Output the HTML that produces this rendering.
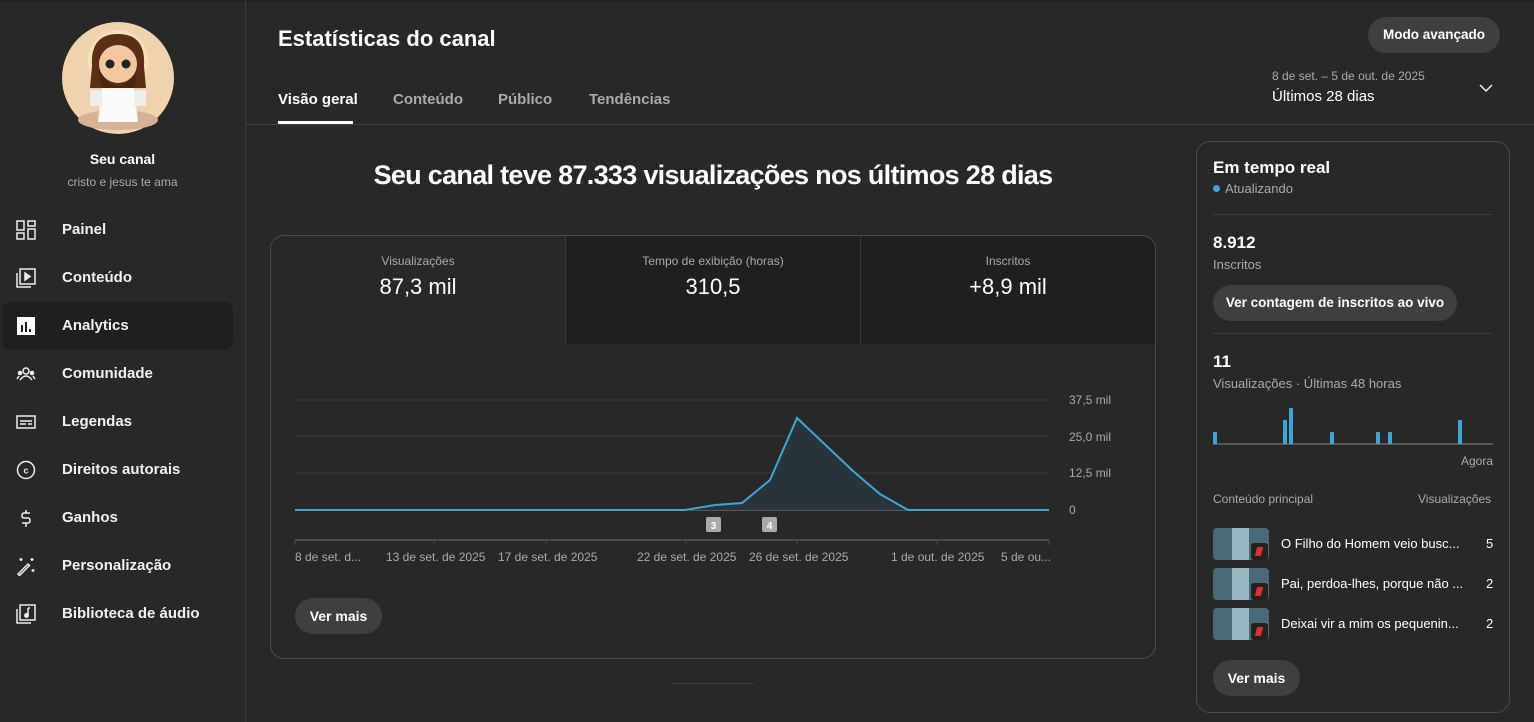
<!DOCTYPE html>
<html><head><meta charset="utf-8"><style>
*{box-sizing:border-box;margin:0;padding:0}
body{width:1534px;height:722px;overflow:hidden;background:#282828;font-family:"Liberation Sans",Arial,sans-serif;color:#fff;position:relative}
.a{position:absolute;white-space:nowrap}
.nav{position:absolute;left:0;width:245px;height:48px}
.nav span{position:absolute;left:62px;top:15px;font-size:15px;font-weight:bold;color:#f1f1f1}
.nav svg{position:absolute;left:16px;top:14px}
.g{color:#aaa}
.btn{position:absolute;background:#3f3f3f;border-radius:20px;font-weight:bold;font-size:14px;text-align:center}
.tile{position:absolute;top:236px;height:108px;text-align:center;background:#1f1f1f}
.tile .l{font-size:12px;color:#aaa;margin-top:18px}
.tile .v{font-size:22px;margin-top:6px}
.ax{position:absolute;font-size:12px;color:#aaa}
</style></head><body>
<div class="a" style="left:0;top:0;width:1534px;height:2px;background:#222"></div>
<div class="a" style="left:245px;top:0;width:1px;height:722px;background:#3a3a3a"></div>
<svg class="a" style="left:62px;top:22px" width="112" height="112" viewBox="0 0 112 112">
<circle cx="56" cy="56" r="56" fill="#efd3ae"/>
<ellipse cx="56" cy="98" rx="40" ry="10" fill="#d7b294"/>
<circle cx="56" cy="38" r="30" fill="#f6e2b8"/>
<path d="M30 44 Q28 12 56 12 Q84 12 82 44 L84 66 L28 66 Z" fill="#5a2f16"/>
<ellipse cx="56" cy="42" rx="19" ry="19" fill="#f3c8a0"/>
<path d="M37 48 Q56 80 75 48 L73 64 Q56 76 39 64Z" fill="#4a2510"/>
<circle cx="48" cy="42" r="4.5" fill="#222"/><circle cx="64" cy="42" r="4.5" fill="#222"/>
<path d="M40 66 L72 66 L76 100 L36 100Z" fill="#fafafa"/>
<rect x="28" y="68" width="12" height="16" fill="#eee"/><rect x="72" y="68" width="12" height="16" fill="#eee"/>
</svg>
<div class="a" style="left:0;width:245px;top:151px;text-align:center;font-size:14px;font-weight:bold">Seu canal</div>
<div class="a" style="left:0;width:245px;top:175px;text-align:center;font-size:12px;color:#aaa">cristo e jesus te ama</div>
<div class="a" style="left:2px;top:302px;width:231px;height:48px;background:#1f1f1f;border-radius:8px"></div>
<div class="nav" style="top:206px"><svg width="20" height="20" fill="none" stroke="#eee" stroke-width="1.5"><rect x="1" y="1" width="7" height="9"/><rect x="12" y="1" width="7" height="5"/><rect x="1" y="13" width="7" height="6"/><rect x="12" y="9" width="7" height="10"/></svg><span>Painel</span></div>
<div class="nav" style="top:254px"><svg width="20" height="20" fill="none" stroke="#eee" stroke-width="1.5"><rect x="4" y="1" width="15" height="15"/><path d="M1 5V19H15"/><path d="M9 5L14 8.5L9 12Z" fill="#eee"/></svg><span>Conteúdo</span></div>
<div class="nav" style="top:302px"><svg width="20" height="20"><rect x="1" y="1" width="18" height="18" fill="#fff"/><rect x="5" y="9" width="2" height="7" fill="#1f1f1f"/><rect x="9" y="6" width="2" height="10" fill="#1f1f1f"/><rect x="13" y="13" width="2" height="3" fill="#1f1f1f"/></svg><span>Analytics</span></div>
<div class="nav" style="top:350px"><svg width="20" height="20" fill="none" stroke="#eee" stroke-width="1.5"><circle cx="10" cy="7" r="3"/><path d="M4 16Q10 8 16 16"/><circle cx="4" cy="9" r="1.5" fill="#eee"/><circle cx="16" cy="9" r="1.5" fill="#eee"/><path d="M1 15L3 12M19 15L17 12"/></svg><span>Comunidade</span></div>
<div class="nav" style="top:398px"><svg width="20" height="20" fill="none" stroke="#eee" stroke-width="1.5"><rect x="1" y="4" width="18" height="12"/><path d="M4 9H16M4 12H10M12 12H16"/></svg><span>Legendas</span></div>
<div class="nav" style="top:446px"><svg width="20" height="20" fill="none" stroke="#eee" stroke-width="1.5"><circle cx="10" cy="10" r="8.5"/><text x="10" y="13.5" font-size="9" font-weight="bold" fill="#eee" stroke="none" text-anchor="middle" font-family="Liberation Sans">c</text></svg><span>Direitos autorais</span></div>
<div class="nav" style="top:494px"><svg width="20" height="20" fill="none" stroke="#eee" stroke-width="1.5"><path d="M14 5H8Q6 5 6 7.5T8 10H12Q14 10 14 12.5T12 15H6M10 2V5M10 15V19"/></svg><span>Ganhos</span></div>
<div class="nav" style="top:542px"><svg width="20" height="20" fill="none" stroke="#eee" stroke-width="1.5"><path d="M2 18L12 8L13.5 9.5L3.5 19.5Z"/><path d="M5 2V5M3.5 3.5H6.5M16 2V5M14.5 3.5H17.5M17 13V16M15.5 14.5H18.5"/></svg><span>Personalização</span></div>
<div class="nav" style="top:590px"><svg width="20" height="20" fill="none" stroke="#eee" stroke-width="1.5"><rect x="4" y="1" width="15" height="15"/><path d="M1 5V19H15"/><path d="M12 4V11M12 4H14" /><circle cx="10.5" cy="11.5" r="1.7" fill="#eee"/></svg><span>Biblioteca de áudio</span></div>
<div class="a" style="left:278px;top:26px;font-size:22px;font-weight:bold">Estatísticas do canal</div>
<div class="a" style="left:278px;top:91px;font-size:15px;font-weight:bold">Visão geral</div>
<div class="a" style="left:278px;top:121px;width:75px;height:3px;background:#fff"></div>
<div class="a g" style="left:393px;top:91px;font-size:15px;font-weight:bold">Conteúdo</div>
<div class="a g" style="left:498px;top:91px;font-size:15px;font-weight:bold">Público</div>
<div class="a g" style="left:589px;top:91px;font-size:15px;font-weight:bold">Tendências</div>
<div class="a" style="left:246px;top:124px;width:1288px;height:1px;background:#3a3a3a"></div>
<div class="btn" style="left:1368px;top:17px;width:132px;height:36px;line-height:36px;font-size:13.5px">Modo avançado</div>
<div class="a g" style="left:1272px;top:69px;font-size:12px">8 de set. – 5 de out. de 2025</div>
<div class="a" style="left:1272px;top:88px;font-size:15px">Últimos 28 dias</div>
<svg class="a" style="left:1478px;top:82px" width="16" height="12"><path d="M2 3L8 9L14 3" fill="none" stroke="#eee" stroke-width="1.5"/></svg>
<div class="a" style="left:270px;width:886px;top:160px;text-align:center;font-size:27px;font-weight:bold;letter-spacing:-0.7px">Seu canal teve 87.333 visualizações nos últimos 28 dias</div>
<div class="a" style="left:270px;top:235px;width:886px;height:424px;border:1px solid #4a4a4a;border-radius:14px;overflow:hidden"></div>
<div class="tile" style="left:271px;width:294px;background:#282828;border-top-left-radius:13px"><div class="l">Visualizações</div><div class="v">87,3 mil</div></div>
<div class="tile" style="left:565px;width:295px;border-left:1px solid #3a3a3a"><div class="l">Tempo de exibição (horas)</div><div class="v">310,5</div></div>
<div class="tile" style="left:860px;width:295px;border-left:1px solid #3a3a3a;border-top-right-radius:13px"><div class="l">Inscritos</div><div class="v">+8,9 mil</div></div>
<svg class="a" style="left:0;top:0" width="1534" height="722">
<g stroke="#3a3a3a" stroke-width="1"><line x1="295" y1="400" x2="1049" y2="400"/><line x1="295" y1="436" x2="1049" y2="436"/><line x1="295" y1="473" x2="1049" y2="473"/></g>
<line x1="295" y1="510" x2="1049" y2="510" stroke="#888"/>
<path d="M685 510L715 505L742 503L770 480L797 418L853 471L880 494L908 510Z" fill="#29353b"/>
<path d="M295 510L685 510L715 505L742 503L770 480L797 418L853 471L880 494L908 510L1049 510" fill="none" stroke="#3ea6d6" stroke-width="2"/>
<line x1="295" y1="540" x2="1049" y2="540" stroke="#4a4a4a" stroke-width="2"/>
<g stroke="#4a4a4a"><line x1="295" y1="540" x2="295" y2="545"/><line x1="434" y1="540" x2="434" y2="545"/><line x1="546" y1="540" x2="546" y2="545"/><line x1="686" y1="540" x2="686" y2="545"/><line x1="797" y1="540" x2="797" y2="545"/><line x1="937" y1="540" x2="937" y2="545"/><line x1="1049" y1="540" x2="1049" y2="545"/></g>
<rect x="706" y="517" width="15" height="15" rx="2" fill="#aaa"/><text x="713.5" y="529" font-size="10" font-weight="bold" fill="#fff" text-anchor="middle" font-family="Liberation Sans">3</text>
<rect x="762" y="517" width="15" height="15" rx="2" fill="#aaa"/><text x="769.5" y="529" font-size="10" font-weight="bold" fill="#fff" text-anchor="middle" font-family="Liberation Sans">4</text>
<line x1="1213" y1="444" x2="1493" y2="444" stroke="#888"/>
<g fill="#3ea6d6"><rect x="1213" y="432" width="4" height="12" rx="1"/><rect x="1283" y="420" width="4" height="24" rx="1"/><rect x="1289" y="408" width="4" height="36" rx="1"/><rect x="1330" y="432" width="4" height="12" rx="1"/><rect x="1376" y="432" width="4" height="12" rx="1"/><rect x="1388" y="432" width="4" height="12" rx="1"/><rect x="1458" y="420" width="4" height="24" rx="1"/></g>
</svg>
<div class="ax" style="left:1069px;top:393px">37,5 mil</div>
<div class="ax" style="left:1069px;top:430px">25,0 mil</div>
<div class="ax" style="left:1069px;top:466px">12,5 mil</div>
<div class="ax" style="left:1069px;top:503px">0</div>
<div class="ax" style="left:295px;top:550px">8 de set. d...</div>
<div class="ax" style="left:386px;top:550px">13 de set. de 2025</div>
<div class="ax" style="left:498px;top:550px">17 de set. de 2025</div>
<div class="ax" style="left:637px;top:550px">22 de set. de 2025</div>
<div class="ax" style="left:749px;top:550px">26 de set. de 2025</div>
<div class="ax" style="left:891px;top:550px">1 de out. de 2025</div>
<div class="ax" style="left:1001px;top:550px">5 de ou...</div>
<div class="btn" style="left:295px;top:598px;width:87px;height:36px;line-height:36px">Ver mais</div>
<div class="a" style="left:672px;top:683px;width:82px;height:1px;background:#3a3a3a"></div>
<div class="a" style="left:1196px;top:141px;width:314px;height:572px;border:1px solid #4a4a4a;border-radius:14px"></div>
<div class="a" style="left:1213px;top:158px;font-size:17px;font-weight:bold">Em tempo real</div>
<div class="a" style="left:1213px;top:185px;width:7px;height:7px;border-radius:50%;background:#3ea6d6"></div>
<div class="a g" style="left:1225px;top:181px;font-size:13px">Atualizando</div>
<div class="a" style="left:1213px;top:214px;width:280px;height:1px;background:#3a3a3a"></div>
<div class="a" style="left:1213px;top:233px;font-size:17px;font-weight:bold">8.912</div>
<div class="a g" style="left:1213px;top:257px;font-size:13px">Inscritos</div>
<div class="btn" style="left:1213px;top:285px;width:244px;height:36px;line-height:36px;font-size:13.5px">Ver contagem de inscritos ao vivo</div>
<div class="a" style="left:1213px;top:333px;width:280px;height:1px;background:#3a3a3a"></div>
<div class="a" style="left:1213px;top:352px;font-size:17px;font-weight:bold">11</div>
<div class="a g" style="left:1213px;top:376px;font-size:13px">Visualizações · Últimas 48 horas</div>
<div class="a g" style="left:1461px;top:454px;font-size:12px">Agora</div>
<div class="a g" style="left:1213px;top:492px;font-size:12px">Conteúdo principal</div>
<div class="a g" style="left:1418px;top:492px;font-size:12px">Visualizações</div>
<div class="a" style="left:1213px;top:528px;width:56px;height:32px;background:#4a6a7a;border-radius:4px"><div style="position:absolute;left:19px;width:17px;height:32px;background:#9ab8c0"></div><div style="position:absolute;left:38px;top:15px;width:17px;height:17px;background:#222;border-radius:3px"><div style="margin:4px 5px;width:6px;height:9px;background:#e52d2d;transform:skewX(-15deg)"></div></div></div>
<div class="a" style="left:1213px;top:568px;width:56px;height:32px;background:#4a6a7a;border-radius:4px"><div style="position:absolute;left:19px;width:17px;height:32px;background:#9ab8c0"></div><div style="position:absolute;left:38px;top:15px;width:17px;height:17px;background:#222;border-radius:3px"><div style="margin:4px 5px;width:6px;height:9px;background:#e52d2d;transform:skewX(-15deg)"></div></div></div>
<div class="a" style="left:1213px;top:608px;width:56px;height:32px;background:#4a6a7a;border-radius:4px"><div style="position:absolute;left:19px;width:17px;height:32px;background:#9ab8c0"></div><div style="position:absolute;left:38px;top:15px;width:17px;height:17px;background:#222;border-radius:3px"><div style="margin:4px 5px;width:6px;height:9px;background:#e52d2d;transform:skewX(-15deg)"></div></div></div>
<div class="a" style="left:1281px;top:536px;font-size:13px">O Filho do Homem veio busc...</div>
<div class="a" style="left:1486px;top:536px;font-size:13px">5</div>
<div class="a" style="left:1281px;top:576px;font-size:13px">Pai, perdoa-lhes, porque não ...</div>
<div class="a" style="left:1486px;top:576px;font-size:13px">2</div>
<div class="a" style="left:1281px;top:616px;font-size:13px">Deixai vir a mim os pequenin...</div>
<div class="a" style="left:1486px;top:616px;font-size:13px">2</div>
<div class="btn" style="left:1213px;top:660px;width:87px;height:36px;line-height:36px">Ver mais</div>
</body></html>
